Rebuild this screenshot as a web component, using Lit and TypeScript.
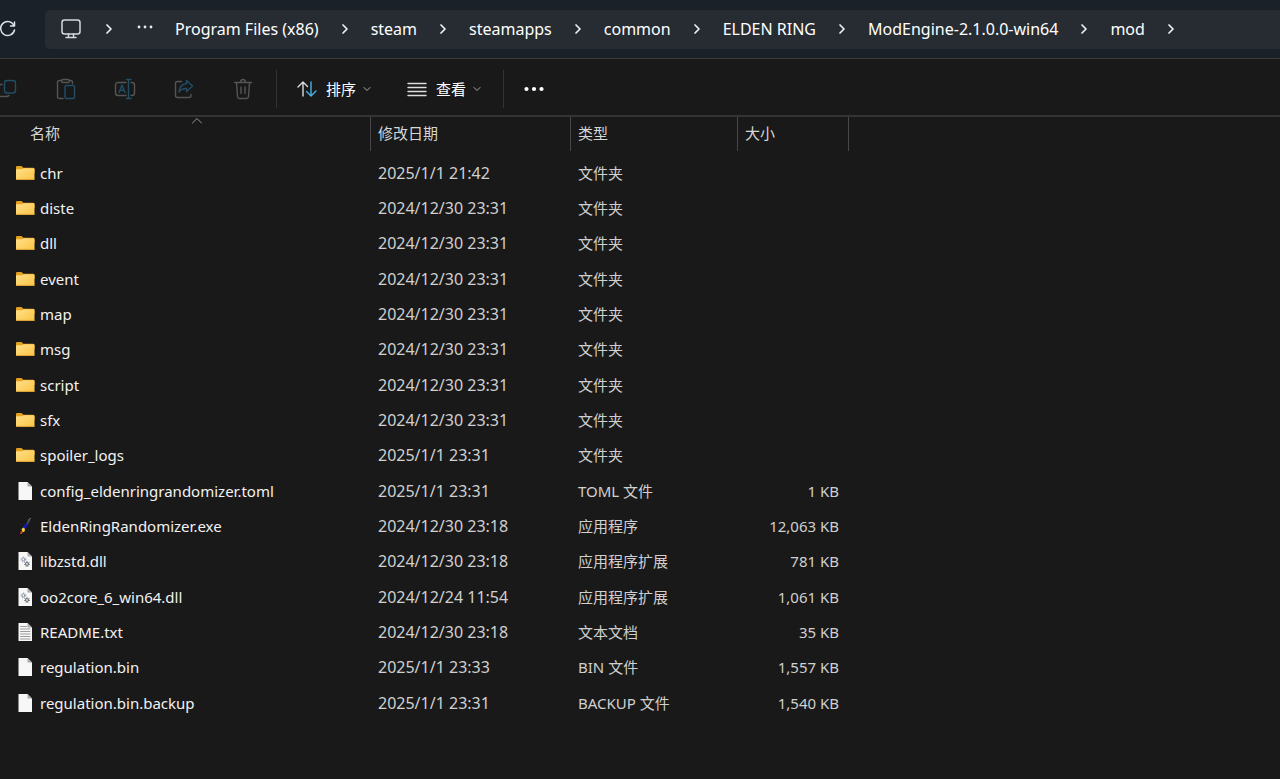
import { LitElement, html, css, svg, TemplateResult } from "lit";
import { customElement } from "lit/decorators.js";

type Kind = "folder" | "file" | "exe" | "dll" | "text";

interface Entry {
  name: string;
  date: string;
  type: string;
  size: string;
  kind: Kind;
}

const entry = (kind: Kind, name: string, date: string, type: string, size = ""): Entry => ({
  kind, name, date, type, size,
});

const ENTRIES: Entry[] = [
  entry("folder", "chr", "2025/1/1 21:42", "文件夹"),
  entry("folder", "diste", "2024/12/30 23:31", "文件夹"),
  entry("folder", "dll", "2024/12/30 23:31", "文件夹"),
  entry("folder", "event", "2024/12/30 23:31", "文件夹"),
  entry("folder", "map", "2024/12/30 23:31", "文件夹"),
  entry("folder", "msg", "2024/12/30 23:31", "文件夹"),
  entry("folder", "script", "2024/12/30 23:31", "文件夹"),
  entry("folder", "sfx", "2024/12/30 23:31", "文件夹"),
  entry("folder", "spoiler_logs", "2025/1/1 23:31", "文件夹"),
  entry("file", "config_eldenringrandomizer.toml", "2025/1/1 23:31", "TOML 文件", "1 KB"),
  entry("exe", "EldenRingRandomizer.exe", "2024/12/30 23:18", "应用程序", "12,063 KB"),
  entry("dll", "libzstd.dll", "2024/12/30 23:18", "应用程序扩展", "781 KB"),
  entry("dll", "oo2core_6_win64.dll", "2024/12/24 11:54", "应用程序扩展", "1,061 KB"),
  entry("text", "README.txt", "2024/12/30 23:18", "文本文档", "35 KB"),
  entry("file", "regulation.bin", "2025/1/1 23:33", "BIN 文件", "1,557 KB"),
  entry("file", "regulation.bin.backup", "2025/1/1 23:31", "BACKUP 文件", "1,540 KB"),
];

const PATH = ["Program Files (x86)", "steam", "steamapps", "common", "ELDEN RING", "ModEngine-2.1.0.0-win64", "mod"];

const page = svg`
  <path d="M3.5 1h9l4.5 4.5V19h-13.500z" fill="#f7f7f7"/>
  <path d="M12.500 1v4.500H17z" fill="#a9a9a9"/>`;

const gear = (x: number, y: number, r: number, color: string) => svg`
  <circle cx=${x} cy=${y} r=${r} fill="none" stroke=${color} stroke-width="1"/>
  <circle cx=${x} cy=${y} r=${r + 1} fill="none" stroke=${color} stroke-width="1" stroke-linecap="butt" stroke-dasharray="1 1.200"/>`;

const KIND_ART: Record<Kind, TemplateResult> = {
  folder: svg`
    <path d="M1 4.200Q1 3 2.200 3H6.500L8.300 4.800H18Q19.500 4.800 19.500 6V10H1z" fill="#e5a01f"/>
    <path d="M1 7Q1 6.200 2 6.200H7L8.500 5.200H18.300Q19.500 5.200 19.500 6.400V15.800Q19.500 17 18.300 17H2.200Q1 17 1 15.800z" fill="url(#folder)"/>
    <path d="M1.300 16.400H19.200" stroke="#d9a136" stroke-width="1"/>`,
  file: page,
  exe: svg`
    <path d="M11 8l2-3.500 1.500-1 1 .5-1 2-2 3z" fill="#45484e"/>
    <path d="M13.500 4l2-1.500" stroke="#85888d" stroke-width="1"/>
    <path d="M9 9l3-2 .5 3-3 4-1.500-1z" fill="#1519b0"/>
    <path d="M6.500 13l2-1.500 1.500 1.500-.5 2.500-2 1z" fill="#f3d63b"/>
    <path d="M6 15l2 .5-1.500 2.500h-1.500z" fill="#e3401c"/>`,
  dll: svg`${page}${gear(8.5, 8.5, 1.5, "#8794a1")}${gear(12, 13, 1.5, "#5d6873")}`,
  text: svg`${page}<path d="M5.500 4.500h6M5.500 7h9.500M5.500 9.500h9.500M5.500 12h9.500M5.500 14.500h9.500M5.500 17h9.500" stroke="#9b9b9b"/>`,
};

const chevronRight = html`<svg class="chevron" viewBox="0 0 8 12" aria-hidden="true"><path d="M2 2L6 6L2 10"/></svg>`;
const chevronDown = html`<svg class="caret" viewBox="0 0 8 6" aria-hidden="true"><path d="M1 1.500L4 4.500L7 1.500"/></svg>`;

@customElement("app-root")
export class AppRoot extends LitElement {
  static styles = css`
    :host {
      display: flex;
      flex-direction: column;
      min-height: 100vh;
      overflow: hidden;
      background: #191919;
      color: #fff;
      font: 15px/20px "Noto Sans", "Noto Sans CJK SC", sans-serif;
    }
    svg { display: block; flex: none; fill: none; stroke-linecap: round; stroke-linejoin: round; }
    button {
      display: flex;
      align-items: center;
      margin: 0;
      padding: 0;
      border: 0;
      background: none;
      color: inherit;
      font: inherit;
    }
    .address {
      display: flex;
      align-items: center;
      gap: 29px;
      height: 58px;
      background: #1b2129;
      border-bottom: 1px solid #3b3b3b;
    }
    .refresh { width: 16px; height: 18px; stroke: #dfe3e8; stroke-width: 1.500; }
    .path {
      display: flex;
      flex: 1;
      align-items: center;
      height: 39px;
      padding-left: 16px;
      border-radius: 5px 0 0 5px;
      background: #272c33;
      white-space: nowrap;
    }
    .pc { width: 20px; height: 20px; stroke: #d4d7db; stroke-width: 1.500; }
    .more { width: 16px; height: 4px; margin: 0 22px 4px 0; fill: #e8eaed; }
    .crumbs { display: flex; align-items: center; gap: 22px; margin: 0; padding: 0; list-style: none; }
    .crumb { display: flex; align-items: center; gap: 22px; font-size: 16px; }
    .root { padding-left: 24px; margin-right: 2px; }
    .chevron { width: 8px; height: 12px; stroke: #eef0f2; stroke-width: 1.700; }
    .toolbar {
      display: flex;
      align-items: center;
      height: 58px;
      padding-top: 3px;
      box-sizing: border-box;
      border-bottom: 2px solid #333;
    }
    .tool { width: 59px; height: 40px; justify-content: center; }
    .clipped { width: 36px; justify-content: flex-start; }
    .tool svg { width: 22px; height: 22px; stroke: #555; stroke-width: 1.400; }
    .clipped svg { width: 17px; }
    .tool .accent { stroke: #224e66; }
    .divider { width: 1px; height: 38px; background: #333; }
    .after-tools { margin-left: 4px; }
    .menus { display: flex; gap: 36px; margin: 0 22px 0 20px; }
    .menu svg { stroke: #ddd; stroke-width: 1.400; }
    .menu-icon { width: 20px; height: 20px; margin-right: 9px; }
    .menu .caret { width: 8px; height: 6px; margin-left: 7px; stroke: #aaa; stroke-width: 1; }
    .menu .blue { stroke: #45b3e8; }
    .overflow { margin-left: 20px; }
    .overflow svg { width: 20px; height: 6px; fill: #fff; }
    .list { border-collapse: collapse; table-layout: fixed; width: 849px; }
    .c-name { width: 371px; }
    .c-date { width: 200px; }
    .c-type { width: 167px; }
    .c-size { width: 111px; }
    th {
      position: relative;
      height: 38px;
      padding: 0;
      font-weight: 400;
      color: #d6d6d6;
      background: linear-gradient(#474747, #474747) right top / 1px 34px no-repeat;
    }
    th button { width: 100%; height: 38px; padding: 0 0 6px 7px; }
    th.name button { padding-left: 30px; }
    .sorted {
      position: absolute;
      top: 0;
      left: 191px;
      width: 12px;
      height: 7px;
      stroke: #999;
      stroke-width: 1;
    }
    td { height: 35px; padding: 0 0 0 7px; color: #d0d0d0; white-space: nowrap; }
    tr:nth-child(3n) td { height: 36px; }
    td.name { padding-left: 15px; color: #f2f2f2; }
    td.date { font-size: 16px; }
    td.size { padding: 0 10px 0 0; text-align: right; }
    .item { display: flex; align-items: center; gap: 5px; color: inherit; text-decoration: none; }
    .item svg { width: 20px; height: 20px; }
    .defs { width: 0; height: 0; }
  `;

  render() {
    return html`
      <header class="address">
        <button aria-label="刷新">
          <svg class="refresh" viewBox="0 0 16 18"><path d="M14 5.500A7 7 0 1 0 14.500 10M14.500 2v4h-4"/></svg>
        </button>
        <nav class="path">
          <button aria-label="此电脑">
            <svg class="pc" viewBox="0 0 20 20"><rect x="1" y="1" width="18" height="14" rx="2.500"/><path d="M7.500 15v3M12.500 15v3M5 18.500h10"/></svg>
          </button>
          <ol class="crumbs">
            <li class="root">${chevronRight}</li>
            <li><button aria-label="更多">
              <svg class="more" viewBox="0 0 16 4"><circle cx="2" cy="2" r="1.400"/><circle cx="8" cy="2" r="1.400"/><circle cx="14" cy="2" r="1.400"/></svg>
            </button></li>
          </ol>
          <ol class="crumbs">
            ${PATH.map((p) => html`<li class="crumb"><button>${p}</button>${chevronRight}</li>`)}
          </ol>
        </nav>
      </header>
      <div class="toolbar" role="toolbar">
        <button class="tool clipped" aria-label="复制" disabled>
          <svg viewBox="0 0 17 22"><path d="M0 6.500H2M0 18.500H6Q8 18.500 9 17.500"/><rect class="accent" x="4.500" y="2.500" width="11" height="12.500" rx="2.500"/></svg>
        </button>
        <button class="tool" aria-label="粘贴" disabled>
          <svg viewBox="0 0 22 22"><path d="M8 20.500H4.500Q2.500 20.500 2.500 18.500V4.500Q2.500 2.500 4.500 2.500H6.500M14.500 2.500H15.500Q17.500 2.500 17.500 4.500V5.500"/><rect x="6.500" y="1.500" width="8" height="3" rx="1.500"/><rect class="accent" x="10" y="7.500" width="9.500" height="13" rx="1.500"/></svg>
        </button>
        <button class="tool" aria-label="重命名" disabled>
          <svg viewBox="0 0 22 22"><path d="M12 4.500H4Q1.500 4.500 1.500 7V15Q1.500 17.500 4 17.500H12M17 4.500H18Q20.500 4.500 20.500 7V15Q20.500 17.500 18 17.500H17"/><path class="accent" d="M5 14.500L8 7L11 14.500M6 12.300H10M12.500 1.500H17M12.500 20.500H17M14.500 1.500V20.500"/></svg>
        </button>
        <button class="tool" aria-label="共享" disabled>
          <svg viewBox="0 0 22 22"><path d="M8.500 3.500H4.500Q2.500 3.500 2.500 5.500V17.500Q2.500 19.500 4.500 19.500H16Q18 19.500 18 17.500V16.500"/><path class="accent" d="M13.500 2.500L19.500 8L13.500 13.500V10.500Q9 10 6 14Q6.500 6.500 13.500 5.500z"/></svg>
        </button>
        <button class="tool" aria-label="删除" disabled>
          <svg viewBox="0 0 22 22"><path d="M2.500 4.500H19.500M8.500 4.500Q8.500 1.500 11 1.500T13.500 4.500M4.500 4.500L5.500 18.500Q5.700 20.500 7.500 20.500H14.500Q16.300 20.500 16.500 18.500L17.500 4.500M9 9V15.500M13 9V15.500"/></svg>
        </button>
        <span class="divider after-tools"></span>
        <div class="menus">
          <button class="menu">
            <svg class="menu-icon" viewBox="0 0 20 20"><path d="M6 17V3M1 8L6 3L10.500 7.500"/><path class="blue" d="M14 3V17M9.500 12.500L14 17L19 12"/></svg>
            <span>排序</span>${chevronDown}
          </button>
          <button class="menu">
            <svg class="menu-icon" viewBox="0 0 20 20"><path d="M1 4.500H19M1 8.500H19M1 12.500H19M1 16.500H19"/></svg>
            <span>查看</span>${chevronDown}
          </button>
        </div>
        <span class="divider"></span>
        <button class="overflow" aria-label="查看更多">
          <svg viewBox="0 0 20 6"><circle cx="2.500" cy="3" r="2.100"/><circle cx="10" cy="3" r="2.100"/><circle cx="17.500" cy="3" r="2.100"/></svg>
        </button>
      </div>
      <svg class="defs" aria-hidden="true">
        <defs><linearGradient id="folder" x1="0" y1="0" x2="1" y2="1"><stop stop-color="#ffe08a"/><stop offset="1" stop-color="#fcc444"/></linearGradient></defs>
      </svg>
      <main>
        <table class="list">
          <colgroup><col class="c-name"><col class="c-date"><col class="c-type"><col class="c-size"></colgroup>
          <thead>
            <tr>
              <th class="name" scope="col" aria-sort="ascending">
                <button>名称</button>
                <svg class="sorted" viewBox="0 0 12 7"><path d="M1.500 6L6 1.500L10.500 6"/></svg>
              </th>
              <th scope="col"><button>修改日期</button></th>
              <th scope="col"><button>类型</button></th>
              <th scope="col"><button>大小</button></th>
            </tr>
          </thead>
          <tbody>
            ${ENTRIES.map((e) => html`
              <tr>
                <td class="name"><a class="item" href="#"><svg viewBox="0 0 20 20" aria-hidden="true">${KIND_ART[e.kind]}</svg>${e.name}</a></td>
                <td class="date">${e.date}</td>
                <td>${e.type}</td>
                <td class="size">${e.size}</td>
              </tr>`)}
          </tbody>
        </table>
      </main>
    `;
  }
}
